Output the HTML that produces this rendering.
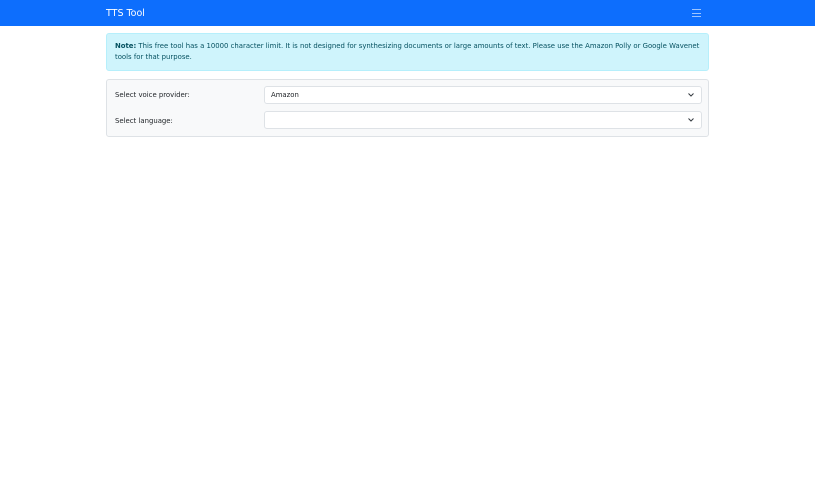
<!DOCTYPE html>
<html><head><style>
body{margin:0;background:#fff;font-family:"DejaVu Sans","Liberation Sans",sans-serif;width:815px;height:480px;overflow:hidden}
.nav{height:26px;background:#0d6efd;position:relative}
.brand{position:absolute;left:106px;top:8px;color:#fff;font-size:9.5px}
.burger{position:absolute;left:692px;top:9px;width:9px}
.burger i{display:block;height:1px;background:rgba(255,255,255,.6);margin-bottom:2.5px}
.alert{position:absolute;left:106px;top:33px;width:601px;height:36px;background:#cff4fc;border:1px solid #b6effb;border-radius:3px;color:#055160;font-size:6.9px;line-height:11px}
.alert .t{position:absolute;top:7px;left:8px;width:590px}
.card{position:absolute;left:106px;top:79px;width:601px;height:56px;background:#f8f9fa;border:1px solid #dee2e6;border-radius:3px}
.lab{position:absolute;left:8px;font-size:6.9px;color:#212529}
.sel{position:absolute;left:157px;height:18px;background:#fff;border:1px solid #dee2e6;border-radius:3px;font-size:6.9px;color:#212529;line-height:16px;padding-left:6px;box-sizing:border-box;width:438px}
.sel svg{position:absolute;right:7px;top:6px}
</style></head><body>
<div class="nav"><div class="brand">TTS Tool</div><div class="burger"><i></i><i></i><i></i></div></div>
<div class="alert"><div class="t"><b>Note:</b> This free tool has a 10000 character limit. It is not designed for synthesizing documents or large amounts of text. Please use the Amazon Polly or Google Wavenet tools for that purpose.</div></div>
<div class="card">
<div class="lab" style="top:11px">Select voice provider:</div>
<div class="sel" style="top:6px">Amazon<svg width="6" height="4" viewBox="0 0 6 4"><path d="M.5 .5L3 3 5.5.5" stroke="#343a40" fill="none" stroke-width="1"/></svg></div>
<div class="lab" style="top:37px">Select language:</div>
<div class="sel" style="top:31px"><svg width="6" height="4" viewBox="0 0 6 4"><path d="M.5 .5L3 3 5.5.5" stroke="#343a40" fill="none" stroke-width="1"/></svg></div>
</div>
</body></html>
